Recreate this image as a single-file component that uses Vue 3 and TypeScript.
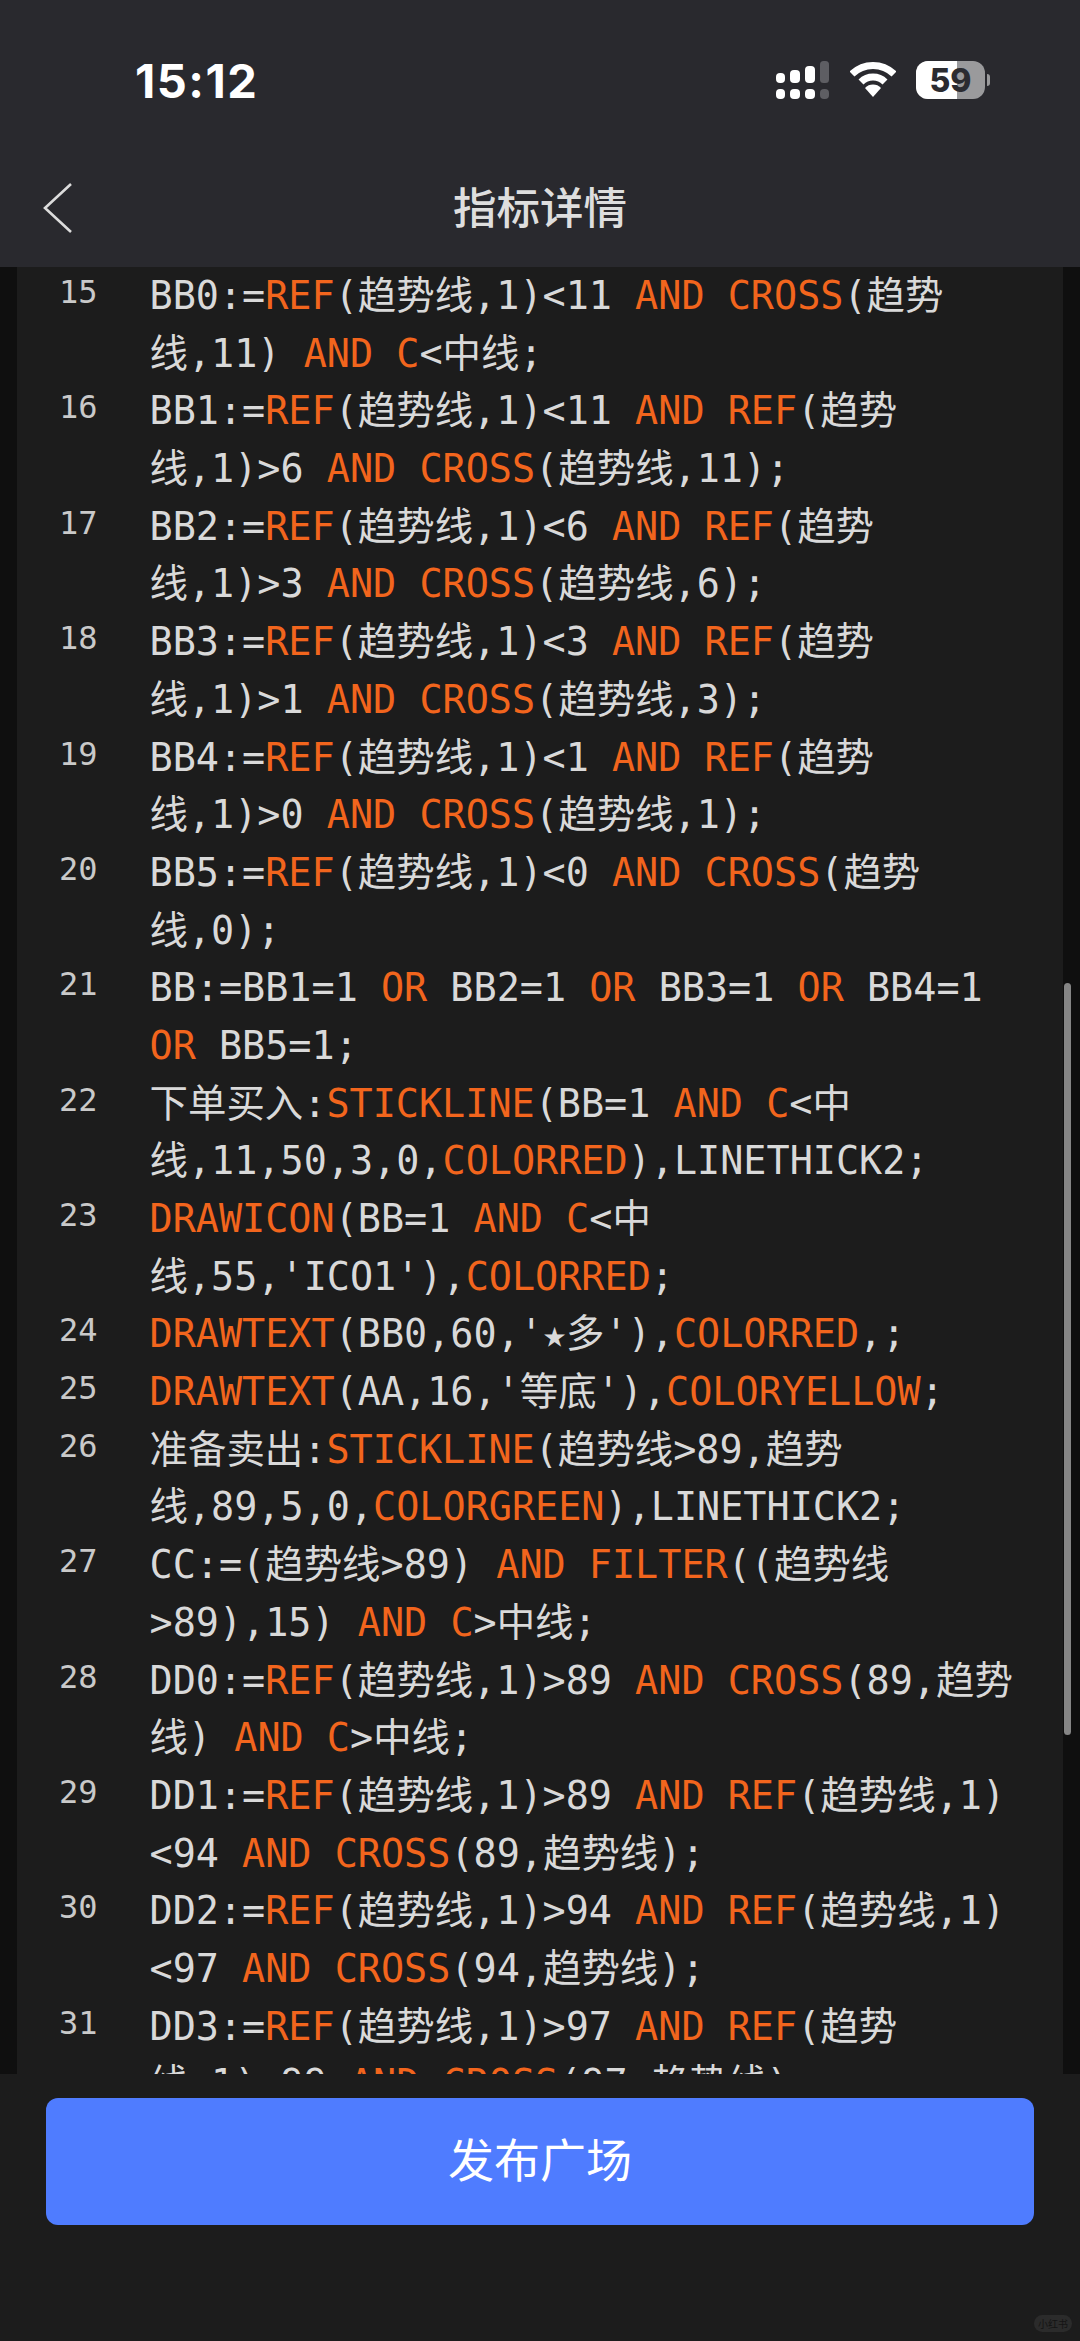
<script setup lang="ts">
interface CodeLine { n: number; rows: string[] }
const lines: CodeLine[] = [
  { n: 15, rows: ['BB0:=REF(趋势线,1)<11 AND CROSS(趋势', '线,11) AND C<中线;'] },
  { n: 16, rows: ['BB1:=REF(趋势线,1)<11 AND REF(趋势', '线,1)>6 AND CROSS(趋势线,11);'] },
  { n: 17, rows: ['BB2:=REF(趋势线,1)<6 AND REF(趋势', '线,1)>3 AND CROSS(趋势线,6);'] },
  { n: 18, rows: ['BB3:=REF(趋势线,1)<3 AND REF(趋势', '线,1)>1 AND CROSS(趋势线,3);'] },
  { n: 19, rows: ['BB4:=REF(趋势线,1)<1 AND REF(趋势', '线,1)>0 AND CROSS(趋势线,1);'] },
  { n: 20, rows: ['BB5:=REF(趋势线,1)<0 AND CROSS(趋势', '线,0);'] },
  { n: 21, rows: ['BB:=BB1=1 OR BB2=1 OR BB3=1 OR BB4=1', 'OR BB5=1;'] },
  { n: 22, rows: ['下单买入:STICKLINE(BB=1 AND C<中', '线,11,50,3,0,COLORRED),LINETHICK2;'] },
  { n: 23, rows: ['DRAWICON(BB=1 AND C<中', "线,55,'ICO1'),COLORRED;"] },
  { n: 24, rows: ["DRAWTEXT(BB0,60,'★多'),COLORRED,;"] },
  { n: 25, rows: ["DRAWTEXT(AA,16,'等底'),COLORYELLOW;"] },
  { n: 26, rows: ['准备卖出:STICKLINE(趋势线>89,趋势', '线,89,5,0,COLORGREEN),LINETHICK2;'] },
  { n: 27, rows: ['CC:=(趋势线>89) AND FILTER((趋势线', '>89),15) AND C>中线;'] },
  { n: 28, rows: ['DD0:=REF(趋势线,1)>89 AND CROSS(89,趋势', '线) AND C>中线;'] },
  { n: 29, rows: ['DD1:=REF(趋势线,1)>89 AND REF(趋势线,1)', '<94 AND CROSS(89,趋势线);'] },
  { n: 30, rows: ['DD2:=REF(趋势线,1)>94 AND REF(趋势线,1)', '<97 AND CROSS(94,趋势线);'] },
  { n: 31, rows: ['DD3:=REF(趋势线,1)>97 AND REF(趋势', '线,1)<99 AND CROSS(97,趋势线);'] },
]
const keywords = new Set(['STICKLINE', 'DRAWICON', 'DRAWTEXT', 'COLORYELLOW', 'COLORGREEN', 'COLORRED', 'FILTER', 'CROSS', 'REF', 'AND', 'OR', 'C'])
const splitter = /(LINETHICK2|STICKLINE|DRAWICON|DRAWTEXT|COLORYELLOW|COLORGREEN|COLORRED|FILTER|CROSS|REF|AND|\bOR\b|\bC(?=[<>]))/
function tokens(row: string): { t: string; k: boolean }[] {
  return row.split(splitter).filter(Boolean).map((t) => ({ t, k: keywords.has(t) }))
}
</script>

<template>
  <div class="page">
    <header class="top">
      <div class="status">
        <span class="time">15:12</span>
        <div class="status-icons">
          <svg class="signal" width="54" height="38" viewBox="0 0 54 38">
            <g fill="#fff">
              <rect x="0" y="12" width="9" height="10" rx="4" />
              <rect x="14" y="9" width="10" height="13" rx="4" />
              <rect x="29" y="5" width="10" height="17" rx="4" />
              <rect x="0" y="28" width="9" height="10" rx="4" />
              <rect x="14" y="28" width="10" height="10" rx="4" />
              <rect x="29" y="28" width="10" height="10" rx="4" />
            </g>
            <g fill="#5e5e63">
              <rect x="44" y="0" width="9" height="22" rx="3.5" />
              <rect x="44" y="28" width="9" height="10" rx="4" />
            </g>
          </svg>
          <svg class="wifi" width="46" height="36" viewBox="0 0 46 36">
            <path d="M2 13 A30 30 0 0 1 44 13" fill="none" stroke="#fff" stroke-width="7" />
            <path d="M11 21 A17 17 0 0 1 35 21" fill="none" stroke="#fff" stroke-width="7" />
            <path d="M15 27 A11 11 0 0 1 31 27 L23 36 Z" fill="#fff" />
          </svg>
          <div class="battery">
            <div class="battery-body">
              <span class="battery-fill"></span>
              <span class="battery-num">59</span>
            </div>
            <span class="battery-cap"></span>
          </div>
        </div>
      </div>
      <div class="nav">
        <svg class="back" width="30" height="52" viewBox="0 0 30 52">
          <path d="M29 2 L3 26 L29 50" fill="none" stroke="#dcdcdc" stroke-width="2.6" />
        </svg>
        <span class="title">指标详情</span>
      </div>
    </header>

    <main class="viewport">
      <div class="code">
        <div v-for="line in lines" :key="line.n" class="line">
          <span class="num">{{ line.n }}</span>
          <div class="rows">
            <div v-for="(row, i) in line.rows" :key="i" class="row">
              <span v-for="(tok, j) in tokens(row)" :key="j" :class="{ kw: tok.k }">{{ tok.t }}</span>
            </div>
          </div>
        </div>
      </div>
      <span class="scrollbar"></span>
    </main>

    <footer class="bottom">
      <button class="publish" type="button">发布广场</button>
      <span class="mark">小红书</span>
    </footer>
  </div>
</template>

<style scoped>
.page {
  width: 1080px;
  height: 2341px;
  display: flex;
  flex-direction: column;
  background: #1c1c1c;
  overflow: hidden;
  font-family: "DejaVu Sans Mono", "Noto Sans CJK SC", monospace;
}
.top {
  height: 267px;
  flex: none;
  background: #29292e;
  display: flex;
  flex-direction: column;
}
.status {
  height: 160px;
  padding: 53px 90px 0 135px;
  display: flex;
  justify-content: space-between;
  box-sizing: border-box;
}
.time {
  font-family: Inter, "Liberation Sans", sans-serif;
  font-size: 47px;
  font-weight: 700;
  letter-spacing: 1.5px;
  line-height: 56px;
  color: #fff;
}
.status-icons {
  display: flex;
  align-items: flex-start;
  gap: 20px;
  padding-top: 8px;
}
.battery {
  display: flex;
  align-items: center;
  gap: 2px;
}
.battery-body {
  position: relative;
  width: 69px;
  height: 38px;
  border-radius: 12px;
  background: #9a9a9c;
  overflow: hidden;
  display: flex;
  align-items: center;
  justify-content: center;
}
.battery-fill {
  position: absolute;
  left: 0;
  top: 0;
  bottom: 0;
  width: 60%;
  background: #fff;
}
.battery-num {
  position: relative;
  font-family: Inter, "Liberation Sans", sans-serif;
  font-size: 32px;
  font-weight: 800;
  color: #2b2b30;
}
.battery-cap {
  width: 3px;
  height: 12px;
  border-radius: 0 3px 3px 0;
  background: #9a9a9c;
}
.nav {
  position: relative;
  flex: 1;
  display: flex;
  align-items: center;
  justify-content: center;
  padding-bottom: 16px;
}
.back {
  position: absolute;
  left: 42px;
  top: 22px;
}
.title {
  font-family: "Noto Sans CJK SC", sans-serif;
  font-size: 43.5px;
  font-weight: 500;
  line-height: 56px;
  color: #dedede;
}
.viewport {
  position: relative;
  height: 1807px;
  flex: none;
  overflow: hidden;
  background: linear-gradient(to right, #0f0f0f 17px, #1c1c1c 17px, #1c1c1c 1063px, #0f0f0f 1063px);
}
.code {
  padding: 0 0 0 59px;
}
.line {
  display: flex;
}
.num {
  width: 90.5px;
  flex: none;
  font-size: 32px;
  line-height: 50px;
  color: #c9c9c9;
}
.row {
  height: 57.7px;
  line-height: 57.7px;
  font-size: 38.45px;
  white-space: pre;
  color: #d9d9d9;
}
.kw {
  color: #f2651d;
}
.scrollbar {
  position: absolute;
  left: 1064px;
  top: 716px;
  width: 7px;
  height: 752px;
  border-radius: 4px;
  background: #858585;
}
.bottom {
  position: relative;
  flex: 1;
  padding: 24px 46px 0;
}
.publish {
  display: block;
  width: 988px;
  height: 127px;
  border: 0;
  border-radius: 12px;
  background: #4f7cff;
  color: #fff;
  font-family: "Noto Sans CJK SC", sans-serif;
  font-size: 46px;
  font-weight: 400;
  padding: 0 0 9px;
}
.mark {
  position: absolute;
  right: 8px;
  bottom: 9px;
  padding: 0 4px;
  border-radius: 9px;
  background: #2b2b2b;
  color: #141414;
  font-family: "Noto Sans CJK SC", sans-serif;
  font-size: 10px;
  line-height: 17px;
}
</style>
